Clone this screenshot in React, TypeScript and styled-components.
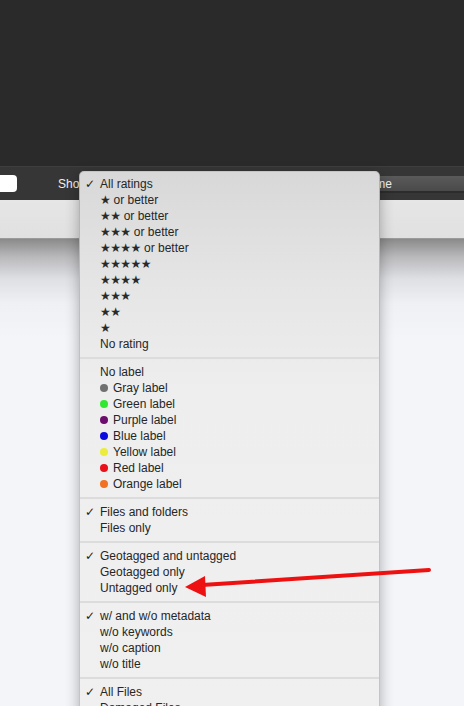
import * as React from 'react';
import styled, { createGlobalStyle } from 'styled-components';

const GlobalStyle = createGlobalStyle`
  html, body {
    margin: 0;
    padding: 0;
    height: 706px;
    overflow: hidden;
    background: #f4f5f9;
  }
  body {
    font-family: 'Liberation Sans', Arial, sans-serif;
  }
`;

const Page = styled.div`
  position: relative;
  display: flex;
  flex-direction: column;
  width: 464px;
  height: 706px;
  overflow: hidden;
`;

const TitleArea = styled.div`
  height: 166px;
  background: #2a2a2a;
`;

const Toolbar = styled.div`
  display: flex;
  align-items: center;
  height: 34px;
  background: #363636;
  border-top: 1px solid #3e3e3e;
  box-sizing: border-box;
`;

const SearchBox = styled.div`
  width: 17px;
  height: 17px;
  margin-top: -1px;
  background: #ffffff;
  border-radius: 0 4px 4px 0;
`;

const ToolbarLabel = styled.span`
  margin-left: 41px;
  font-size: 12px;
  color: #f0f0f0;
`;

const SortButton = styled.div`
  margin-left: auto;
  width: 124px;
  height: 17px;
  padding-left: 20px;
  box-sizing: border-box;
  display: flex;
  align-items: center;
  font-size: 12px;
  color: #f0f0f0;
  background: linear-gradient(#5a5a5a, #4a4a4a);
  border-bottom: 2px solid #2c2c2c;
  margin-top: 2px;
`;

const FilterBand = styled.div`
  height: 38px;
  background: linear-gradient(#e6e6e6, #e0e0e0);
  border-bottom: 1px solid #9a9a9a;
`;

const Content = styled.div`
  flex: 1;
  background: linear-gradient(
    #8a8a8a 0px,
    #b9b9bc 18px,
    #dfe0e4 40px,
    #eef0f4 64px,
    #f4f5f9 100px
  );
`;

const Menu = styled.div`
  position: absolute;
  left: 79px;
  top: 171px;
  width: 301px;
  height: 560px;
  padding-top: 4px;
  box-sizing: border-box;
  border-radius: 5px 5px 0 0;
  border: 1px solid rgba(0, 0, 0, 0.18);
  background: linear-gradient(#d8d8d8 0px, #e6e6e6 120px, #eeeeee 220px, #f0f0f0 100%);
  box-shadow: 0 4px 14px rgba(0, 0, 0, 0.3);
  font-size: 12px;
  color: #262626;
`;

const Item = styled.div`
  display: flex;
  align-items: center;
  height: 16px;
  line-height: 16px;
  white-space: nowrap;
`;

const Check = styled.span`
  flex: none;
  width: 20px;
  padding-left: 5px;
  box-sizing: border-box;
  font-family: 'DejaVu Sans', sans-serif;
  font-size: 12px;
  font-weight: bold;
  color: #222;
`;

const Label = styled.span`
  white-space: pre;
`;

const Stars = styled.span`
  font-family: 'DejaVu Sans', sans-serif;
  font-size: 12px;
  letter-spacing: -0.6px;
  color: #2a2a2a;
`;

const Dot = styled.span<{ $color: string }>`
  flex: none;
  width: 8px;
  height: 8px;
  border-radius: 50%;
  margin-right: 5px;
  background: ${(p) => p.$color};
`;

const Separator = styled.div`
  height: 2px;
  margin: 5px 0;
  background: #dcdcdc;
`;

const Arrow = styled.svg`
  position: absolute;
  left: 0;
  top: 0;
  pointer-events: none;
`;

type Entry = { label: string; checked?: boolean; stars?: number; dot?: string };

const sections: Entry[][] = [
  [
    { label: 'All ratings', checked: true },
    { label: ' or better', stars: 1 },
    { label: ' or better', stars: 2 },
    { label: ' or better', stars: 3 },
    { label: ' or better', stars: 4 },
    { label: '', stars: 5 },
    { label: '', stars: 4 },
    { label: '', stars: 3 },
    { label: '', stars: 2 },
    { label: '', stars: 1 },
    { label: 'No rating' },
  ],
  [
    { label: 'No label' },
    { label: 'Gray label', dot: '#707070' },
    { label: 'Green label', dot: '#30e830' },
    { label: 'Purple label', dot: '#6c0c6c' },
    { label: 'Blue label', dot: '#0b0be0' },
    { label: 'Yellow label', dot: '#ecec3c' },
    { label: 'Red label', dot: '#ea0f18' },
    { label: 'Orange label', dot: '#f07222' },
  ],
  [{ label: 'Files and folders', checked: true }, { label: 'Files only' }],
  [
    { label: 'Geotagged and untagged', checked: true },
    { label: 'Geotagged only' },
    { label: 'Untagged only' },
  ],
  [
    { label: 'w/ and w/o metadata', checked: true },
    { label: 'w/o keywords' },
    { label: 'w/o caption' },
    { label: 'w/o title' },
  ],
  [{ label: 'All Files', checked: true }, { label: 'Damaged Files' }],
];

const App = (): JSX.Element => (
  <Page>
    <GlobalStyle />
    <TitleArea />
    <Toolbar>
      <SearchBox />
      <ToolbarLabel>Show:</ToolbarLabel>
      <SortButton>Name</SortButton>
    </Toolbar>
    <FilterBand />
    <Content />
    <Menu>
      {sections.map((items, si) => (
        <React.Fragment key={si}>
          {si > 0 && <Separator />}
          {items.map((it, ii) => (
            <Item key={ii}>
              <Check>{it.checked ? '✓' : ''}</Check>
              {it.dot && <Dot $color={it.dot} />}
              {it.stars ? <Stars>{'★'.repeat(it.stars)}</Stars> : null}
              {it.label && <Label>{it.label}</Label>}
            </Item>
          ))}
        </React.Fragment>
      ))}
    </Menu>
    <Arrow width="464" height="706" viewBox="0 0 464 706">
      <line x1="429" y1="570" x2="202" y2="585" stroke="#ee1111" strokeWidth="4" strokeLinecap="round" />
      <polygon points="185,587 205,576 206,597" fill="#ee1111" />
    </Arrow>
  </Page>
);

export default App;
